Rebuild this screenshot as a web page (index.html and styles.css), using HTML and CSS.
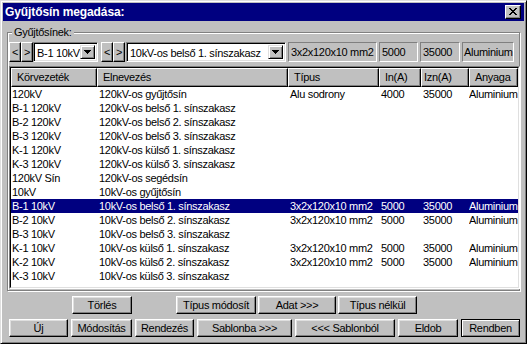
FILE: index.html
```html
<!DOCTYPE html>
<html lang="hu">
<head>
    <meta charset="UTF-8">
    <title>Gyűjtősín megadása</title>
    <link rel="stylesheet" href="styles.css">
</head>
<body>

<div class="window">
    <div class="titlebar">
        <span class="title">Gyűjtősín megadása:</span>
        <button class="close-btn">
            <svg width="8" height="7" viewBox="0 0 8 7" shape-rendering="crispEdges"><path d="M0 0h2v1H0zM6 0h2v1H6zM1 1h2v1H1zM5 1h2v1H5zM2 2h4v1H2zM3 3h2v1H3zM2 4h4v1H2zM1 5h2v1H1zM5 5h2v1H5zM0 6h2v1H0zM6 6h2v1H6z" fill="#000"/></svg>
        </button>
    </div>

    <fieldset class="group">
        <legend>Gyűjtősínek:</legend>
        <div class="selector">
            <button class="arrow-btn">&lt;</button>
            <button class="arrow-btn">&gt;</button>
            <div class="combo combo-small">
                <span class="combo-text">B-1 10kV</span>
                <span class="drop-btn"><svg width="7" height="4" viewBox="0 0 7 4" shape-rendering="crispEdges"><path d="M0 0h7v1H0zM1 1h5v1H1zM2 2h3v1H2zM3 3h1v1H3z" fill="#000"/></svg></span>
            </div>
            <button class="arrow-btn arrow-gap">&lt;</button>
            <button class="arrow-btn">&gt;</button>
            <div class="combo combo-large">
                <span class="combo-text">10kV-os belső 1. sínszakasz</span>
                <span class="drop-btn"><svg width="7" height="4" viewBox="0 0 7 4" shape-rendering="crispEdges"><path d="M0 0h7v1H0zM1 1h5v1H1zM2 2h3v1H2zM3 3h1v1H3z" fill="#000"/></svg></span>
            </div>
            <div class="field field-type">3x2x120x10 mm2</div>
            <div class="field field-in">5000</div>
            <div class="field field-izn">35000</div>
            <div class="field field-mat">Aluminium</div>
        </div>

        <div class="list">
            <div class="list-inner" id="busList">
                <div class="row header">
                    <div class="hcell">Körvezeték</div>
                    <div class="hcell">Elnevezés</div>
                    <div class="hcell">Típus</div>
                    <div class="hcell">In(A)</div>
                    <div class="hcell hcell-izn">Izn(A)</div>
                    <div class="hcell">Anyaga</div>
                </div>
            </div>
        </div>
    </fieldset>

    <div class="buttons buttons-top">
        <button class="btn w60">Törlés</button>
        <button class="btn w80 push">Típus módosít</button>
        <button class="btn w78">Adat &gt;&gt;&gt;</button>
        <button class="btn w79">Típus nélkül</button>
    </div>
    <div class="buttons buttons-bottom">
        <button class="btn w59">Új</button>
        <button class="btn w61">Módosítás</button>
        <button class="btn w59">Rendezés</button>
        <button class="btn w95">Sablonba &gt;&gt;&gt;</button>
        <button class="btn w100">&lt;&lt;&lt; Sablonból</button>
        <button class="btn w60">Eldob</button>
        <button class="btn w59 default">Rendben</button>
    </div>
</div>

<script>
    const busbars = [
        ['120kV', '120kV-os gyűjtősín', 'Alu sodrony', '4000', '35000', 'Aluminium'],
        ['B-1 120kV', '120kV-os belső 1. sínszakasz'],
        ['B-2 120kV', '120kV-os belső 2. sínszakasz'],
        ['B-3 120kV', '120kV-os belső 3. sínszakasz'],
        ['K-1 120kV', '120kV-os külső 1. sínszakasz'],
        ['K-3 120kV', '120kV-os külső 3. sínszakasz'],
        ['120kV Sín', '120kV-os segédsín'],
        ['10kV', '10kV-os gyűjtősín'],
        ['B-1 10kV', '10kV-os belső 1. sínszakasz', '3x2x120x10 mm2', '5000', '35000', 'Aluminium'],
        ['B-2 10kV', '10kV-os belső 2. sínszakasz', '3x2x120x10 mm2', '5000', '35000', 'Aluminium'],
        ['B-3 10kV', '10kV-os belső 3. sínszakasz'],
        ['K-1 10kV', '10kV-os külső 1. sínszakasz', '3x2x120x10 mm2', '5000', '35000', 'Aluminium'],
        ['K-2 10kV', '10kV-os külső 2. sínszakasz', '3x2x120x10 mm2', '5000', '35000', 'Aluminium'],
        ['K-3 10kV', '10kV-os külső 3. sínszakasz']
    ];
    const selectedIndex = 8;

    const list = document.getElementById('busList');
    busbars.forEach((bus, index) => {
        let cells = '';
        for (let i = 0; i < 6; i++) {
            cells += `<div class="cell">${bus[i] || ''}</div>`;
        }
        list.innerHTML += `<div class="row${index === selectedIndex ? ' selected' : ''}">${cells}</div>`;
    });
</script>

</body>
</html>
```

FILE: styles.css
```css
* {
    box-sizing: border-box;
}
body {
    margin: 0;
    background: #c0c0c0;
    font-family: "Liberation Sans", Arial, sans-serif;
    font-size: 11px;
    letter-spacing: -0.3px;
    color: #000;
}
button {
    font-family: inherit;
    font-size: 11px;
    letter-spacing: inherit;
    color: #000;
    margin: 0;
    padding: 0;
}
.window {
    width: 527px;
    height: 344px;
    background: #c0c0c0;
    border: 1px solid;
    border-color: #dfdfdf #000 #000 #dfdfdf;
    box-shadow: inset 1px 1px 0 #fff, inset -1px -1px 0 #808080;
    padding: 2px;
}
.titlebar {
    height: 18px;
    background: #000080;
    color: #fff;
    display: flex;
    align-items: center;
    justify-content: space-between;
    padding: 0 3px 0 2px;
}
.title {
    font-weight: bold;
    font-size: 12px;
    letter-spacing: -0.1px;
}
.close-btn {
    width: 16px;
    height: 14px;
    background: #c0c0c0;
    border: 1px solid;
    border-color: #fff #000 #000 #fff;
    box-shadow: inset -1px -1px 0 #808080;
    display: flex;
    align-items: center;
    justify-content: center;
    padding: 0 1px 1px 0;
}
.group {
    margin: 5px 4px 0 4px;
    padding: 4px 1px 1px 1px;
    border: 1px solid #808080;
    box-shadow: inset 1px 1px 0 #fff, 1px 1px 0 #fff;
    min-width: 0;
}
.group legend {
    margin-left: 3px;
    padding: 0 2px;
    line-height: 12px;
    background: #c0c0c0;
}
.selector {
    display: flex;
    height: 20px;
}
.arrow-btn {
    width: 12px;
    height: 20px;
    background: #c0c0c0;
    border: 1px solid;
    border-color: #fff #000 #000 #fff;
    box-shadow: inset -1px -1px 0 #808080;
    line-height: 16px;
}
.arrow-gap {
    margin-left: 3px;
}
.combo {
    display: flex;
    align-items: stretch;
    height: 20px;
    background: #fff;
    border: 1px solid;
    border-color: #808080 #fff #fff #808080;
    box-shadow: inset 1px 1px 0 #000, inset -1px -1px 0 #dfdfdf;
    padding: 2px;
}
.combo-small {
    width: 65px;
}
.combo-large {
    width: 160px;
    margin-left: 1px;
}
.combo-text {
    flex: 1;
    line-height: 16px;
    padding-left: 1px;
    white-space: nowrap;
    overflow: hidden;
}
.drop-btn {
    width: 15px;
    flex: none;
    background: #c0c0c0;
    border: 1px solid;
    border-color: #dfdfdf #000 #000 #dfdfdf;
    box-shadow: inset 1px 1px 0 #fff, inset -1px -1px 0 #808080;
    display: flex;
    align-items: center;
    justify-content: center;
}
.field {
    height: 20px;
    border: 1px solid;
    border-color: #808080 #fff #fff #808080;
    padding-left: 2px;
    line-height: 18px;
    margin-left: 2px;
    white-space: nowrap;
    overflow: hidden;
}
.field-type {
    width: 89px;
}
.field-in {
    width: 39px;
}
.field-izn {
    width: 40px;
}
.field-mat {
    width: 52px;
    padding-left: 1px;
}
.list {
    margin-top: 4px;
    margin-right: -2px;
    height: 223px;
    border: 1px solid;
    border-color: #808080 #fff #fff #808080;
}
.list-inner {
    height: 100%;
    background: #fff;
    border: 1px solid;
    border-color: #000 #dfdfdf #dfdfdf #000;
    overflow: hidden;
}
.row {
    display: grid;
    grid-template-columns: 86px 191px 91px 42px 48px 1fr;
    height: 14px;
    line-height: 14px;
}
.row.header {
    height: 19px;
}
.hcell {
    background: #c0c0c0;
    border: 1px solid;
    border-color: #fff #000 #000 #fff;
    box-shadow: inset -1px -1px 0 #808080;
    padding-left: 5px;
    line-height: 16px;
    white-space: nowrap;
    overflow: hidden;
}
.hcell-izn {
    padding-left: 2px;
}
.cell {
    padding-left: 2px;
    white-space: nowrap;
    overflow: hidden;
}
.row .cell:first-child {
    padding-left: 1px;
}
.row .cell:last-child {
    padding-left: 0;
}
.row.selected {
    background: #000080;
    color: #fff;
}
.buttons {
    display: flex;
    height: 18px;
}
.buttons-top {
    margin-top: 5px;
    padding-left: 69px;
    gap: 2px;
}
.buttons-bottom {
    margin-top: 5px;
    padding-left: 6px;
    gap: 3px;
}
.push {
    margin-left: 42px;
}
.btn {
    height: 18px;
    background: #c0c0c0;
    border: 1px solid;
    border-color: #fff #000 #000 #fff;
    box-shadow: inset -1px -1px 0 #808080, inset 1px 1px 0 #dfdfdf;
    line-height: 14px;
}
.btn.default {
    border-color: #000;
    box-shadow: inset 1px 1px 0 #fff, inset -1px -1px 0 #808080;
}
.w59 { width: 59px; }
.w60 { width: 60px; }
.w61 { width: 61px; }
.w78 { width: 78px; }
.w79 { width: 79px; }
.w80 { width: 80px; }
.w95 { width: 95px; }
.w100 { width: 100px; }
```
